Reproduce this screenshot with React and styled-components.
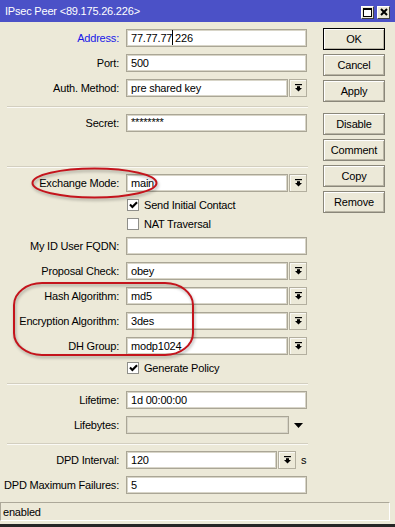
import React from "react";
import styled, { createGlobalStyle } from "styled-components";

const GlobalStyle = createGlobalStyle`
  html, body { margin: 0; padding: 0; background: #ece9d8; }
  body {
    font-family: "Liberation Sans", Arial, sans-serif;
    font-size: 11px;
    letter-spacing: -0.2px;
    color: #000;
  }
  * { box-sizing: border-box; }
`;

const Window = styled.div`
  position: relative;
  width: 395px;
  height: 527px;
  display: flex;
  flex-direction: column;
  background: #ece9d8;
  overflow: hidden;
`;

const TitleBar = styled.div`
  flex: none;
  height: 22px;
  background: #4b51c7;
  color: #fff;
  display: flex;
  align-items: center;
  padding: 0 5px 0 5px;
`;

const TitleText = styled.div`
  flex: 1;
  white-space: nowrap;
`;

const TitleButtons = styled.div`
  display: flex;
  gap: 3px;
  margin-top: 2px;
`;

const TitleButton = styled.div`
  width: 13px;
  height: 13px;
  background: #ece9d8;
  border: 1px solid;
  border-color: #fff #404040 #404040 #fff;
  display: flex;
  align-items: center;
  justify-content: center;
`;

const Body = styled.div`
  flex: 1;
  display: flex;
  align-items: flex-start;
`;

const Form = styled.div`
  width: 310px;
  padding-top: 7px;
  display: flex;
  flex-direction: column;
  gap: 7px;
`;

const Row = styled.div`
  display: flex;
  align-items: center;
  height: 18px;
`;

const Label = styled.div`
  width: 119px;
  margin-right: 7px;
  text-align: right;
  white-space: nowrap;
  color: ${(p) => (p.$accent ? "#1818e8" : "#000")};
`;

const Field = styled.div`
  width: ${(p) => p.$w}px;
  height: 18px;
  background: ${(p) => (p.$disabled ? "#ece9d8" : "#fff")};
  border: 1px solid #aaa696;
  box-shadow: inset 0 0 0 1px #d8d5c8;
  padding-left: 4px;
  display: flex;
  align-items: center;
  white-space: nowrap;
  overflow: hidden;
`;

const Stars = styled.span`
  align-self: flex-start;
  margin-top: 1px;
`;

const Caret = styled.span`
  position: relative;
  color: transparent;
  &::after {
    content: "";
    position: absolute;
    left: 0;
    top: -2px;
    bottom: -1px;
    width: 1px;
    background: #000;
  }
`;

const DropButton = styled.div`
  width: 18px;
  height: 18px;
  margin-left: 1px;
  background: #ece9d8;
  border: 1px solid #b3af9f;
  box-shadow: inset 1px 1px 0 #faf9f4;
  display: flex;
  align-items: center;
  justify-content: center;
`;

const Unit = styled.span`
  margin-left: 5px;
`;

const Arrow = styled.svg`
  margin-left: 5px;
`;

const Spacer = styled.div`
  height: 18px;
`;

const Separator = styled.div`
  margin: 2px 0 -1px 7px;
  width: 301px;
  height: 2px;
  border-top: 1px solid #d3cfc0;
  border-bottom: 1px solid #fbfaf5;
`;

const CheckRow = styled.div`
  display: flex;
  align-items: center;
  height: 12px;
  padding-left: 127px;
  gap: 5px;
`;

const Box = styled.div`
  width: 12px;
  height: 12px;
  background: #fff;
  border: 1px solid #8f8f8a;
  display: flex;
  align-items: center;
  justify-content: center;
`;

const Side = styled.div`
  margin-left: 13px;
  margin-top: 6px;
  display: flex;
  flex-direction: column;
  gap: 11px;
`;

const ButtonGroup = styled.div`
  display: flex;
  flex-direction: column;
  gap: 4px;
`;

const Button = styled.div`
  width: 62px;
  height: 22px;
  display: flex;
  align-items: center;
  justify-content: center;
  background: #ece9d8;
  border: 1px solid ${(p) => (p.$default ? "#000" : "#8a877a")};
  box-shadow: inset 1px 1px 0 #fff, inset -1px -1px 0 #b9b5a5;
`;

const StatusBar = styled.div`
  flex: none;
  width: 390px;
  height: 19px;
  border: 1px solid;
  border-color: #aca899 #fff #fff #aca899;
  padding-left: 2px;
  display: flex;
  align-items: center;
`;

const BottomEdge = styled.div`
  flex: none;
  height: 3px;
  margin-top: 3px;
  background: #262626;
`;

const Annotations = styled.svg`
  position: absolute;
  left: 0;
  top: 0;
  pointer-events: none;
  filter: drop-shadow(1px 2px 1.5px rgba(0, 0, 0, 0.3));
`;

const DropIcon = () => (
  <svg width="7" height="8" viewBox="0 0 7 8">
    <rect x="0" y="0" width="7" height="1.2" fill="#000" />
    <rect x="2" y="2.2" width="3" height="2" fill="#000" />
    <polygon points="0,4 7,4 3.5,7.6" fill="#000" />
  </svg>
);

const CheckIcon = () => (
  <svg width="9" height="8" viewBox="0 0 9 8">
    <polyline points="1,3.6 3.4,6 8,1.2" fill="none" stroke="#000" strokeWidth="2.1" />
  </svg>
);

const TextRow = ({ label, accent, children }) => (
  <Row>
    <Label $accent={accent}>{label}</Label>
    <Field $w={181}>{children}</Field>
  </Row>
);

const SelectRow = ({ label, value }) => (
  <Row>
    <Label>{label}</Label>
    <Field $w={162}>{value}</Field>
    <DropButton>
      <DropIcon />
    </DropButton>
  </Row>
);

const Check = ({ label, checked }) => (
  <CheckRow>
    <Box>{checked && <CheckIcon />}</Box>
    <span>{label}</span>
  </CheckRow>
);

export default function App() {
  return (
    <>
      <GlobalStyle />
      <Window>
        <TitleBar>
          <TitleText>IPsec Peer &lt;89.175.26.226&gt;</TitleText>
          <TitleButtons>
            <TitleButton>
              <svg width="9" height="9" viewBox="0 0 9 9">
                <rect x="0.5" y="0.5" width="8" height="8" fill="#fff" stroke="#000" />
                <rect x="0" y="0" width="9" height="2" fill="#000" />
              </svg>
            </TitleButton>
            <TitleButton>
              <svg width="8" height="8" viewBox="0 0 8 8">
                <path d="M1 1 L7 7 M7 1 L1 7" stroke="#000" strokeWidth="2" />
              </svg>
            </TitleButton>
          </TitleButtons>
        </TitleBar>
        <Body>
          <Form>
            <TextRow label="Address:" accent>
              77.77.77<Caret>.</Caret>226
            </TextRow>
            <TextRow label="Port:">500</TextRow>
            <SelectRow label="Auth. Method:" value="pre shared key" />
            <Separator />
            <TextRow label="Secret:">
              <Stars>********</Stars>
            </TextRow>
            <Spacer />
            <Separator />
            <SelectRow label="Exchange Mode:" value="main" />
            <Check label="Send Initial Contact" checked />
            <Check label="NAT Traversal" />
            <TextRow label="My ID User FQDN:" />
            <SelectRow label="Proposal Check:" value="obey" />
            <SelectRow label="Hash Algorithm:" value="md5" />
            <SelectRow label="Encryption Algorithm:" value="3des" />
            <SelectRow label="DH Group:" value="modp1024" />
            <Check label="Generate Policy" checked />
            <Separator />
            <TextRow label="Lifetime:">1d 00:00:00</TextRow>
            <Row>
              <Label>Lifebytes:</Label>
              <Field $w={163} $disabled />
              <Arrow width="9" height="5" viewBox="0 0 9 5">
                <polygon points="0,0 9,0 4.5,5" fill="#000" />
              </Arrow>
            </Row>
            <Separator />
            <Row>
              <Label>DPD Interval:</Label>
              <Field $w={151}>120</Field>
              <DropButton>
                <DropIcon />
              </DropButton>
              <Unit>s</Unit>
            </Row>
            <TextRow label="DPD Maximum Failures:">5</TextRow>
          </Form>
          <Side>
            <ButtonGroup>
              <Button $default>OK</Button>
              <Button>Cancel</Button>
              <Button>Apply</Button>
            </ButtonGroup>
            <ButtonGroup>
              <Button>Disable</Button>
              <Button>Comment</Button>
              <Button>Copy</Button>
              <Button>Remove</Button>
            </ButtonGroup>
          </Side>
        </Body>
        <StatusBar>enabled</StatusBar>
        <BottomEdge />
        <Annotations width="395" height="527" viewBox="0 0 395 527">
          <ellipse cx="94.5" cy="183" rx="62" ry="14.5" fill="none" stroke="#c4141c" strokeWidth="2" />
          <rect x="14" y="283" width="179" height="72" rx="28" ry="22" fill="none" stroke="#c4141c" strokeWidth="2" />
        </Annotations>
      </Window>
    </>
  );
}
